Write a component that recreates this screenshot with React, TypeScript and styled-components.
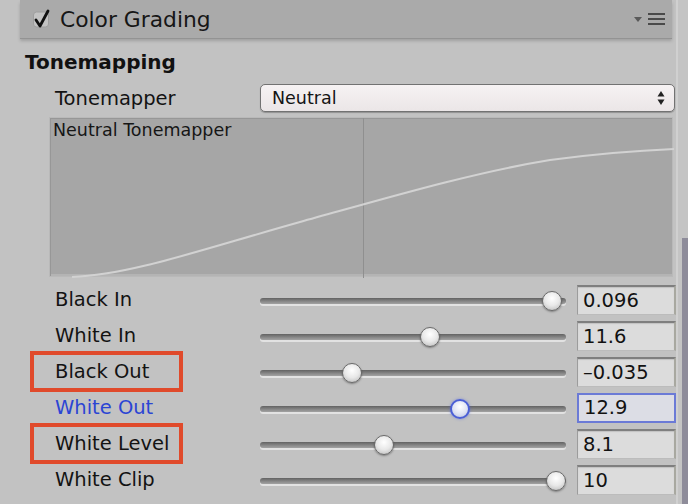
import React from "react";
import styled, { createGlobalStyle } from "styled-components";

const Global = createGlobalStyle`
  html, body { margin: 0; padding: 0; background: #c2c2c2; }
  body { font-family: "DejaVu Sans", "Liberation Sans", sans-serif; color: #111; }
`;

const Frame = styled.div`
  width: 688px;
  height: 504px;
  overflow: hidden;
  display: flex;
  background: #c2c2c2;
`;

const Main = styled.div`
  flex: 1;
  min-width: 0;
  padding-left: 20px;
  display: flex;
  flex-direction: column;
`;

const Gutter = styled.div`
  width: 12px;
  box-sizing: border-box;
  display: flex;
  flex-direction: column;
  align-items: flex-end;
  border-left: 2px solid #d0d0d0;
  background: #c4c4c4;
`;

const ScrollThumb = styled.div`
  width: 6px;
  margin-top: 238px;
  flex: 1;
  background: #8e8c9a;
`;

const Header = styled.div`
  height: 38px;
  margin-right: 4px;
  background: #aaaaaa;
  display: flex;
  align-items: center;
  padding: 0 7px 0 12px;
  box-shadow: 0 1px 0 #939393, 0 3px 3px rgba(0, 0, 0, 0.18);
`;

const HeaderTitle = styled.span`
  flex: 1;
  margin-left: 8px;
  font-size: 21.8px;
  color: #161616;
`;

const SectionTitle = styled.div`
  margin: 12px 0 0 5px;
  font-size: 20px;
  line-height: 24px;
  font-weight: bold;
  color: #111;
`;

const FieldRow = styled.div`
  margin-top: 10px;
  height: 28px;
  display: grid;
  grid-template-columns: 205px 1fr;
  align-items: center;
  padding-left: 35px;
  padding-right: 1px;
`;

const Label = styled.div<{ $active?: boolean; $marked?: boolean }>`
  position: relative;
  font-size: 19.5px;
  color: ${(p) => (p.$active ? "#2b45d4" : "#131313")};
  white-space: nowrap;
  ${(p) =>
    p.$marked &&
    `
    &::before {
      content: "";
      position: absolute;
      left: -25px;
      width: 145px;
      top: -9px;
      height: 33px;
      border: 4px solid #e04a2b;
    }
  `}
`;

const Dropdown = styled.div`
  height: 28px;
  box-sizing: border-box;
  border: 1px solid #727272;
  border-radius: 5px;
  background: linear-gradient(#f6f2f3, #ebe6e7);
  box-shadow: 0 1px 1px rgba(0, 0, 0, 0.25);
  display: flex;
  align-items: center;
  padding: 0 9px 0 11px;
  font-size: 17.5px;
  color: #141414;
`;

const DropdownText = styled.span`
  flex: 1;
`;

const Graph = styled.div`
  position: relative;
  margin: 5px 3px 0 29px;
  height: 160px;
  box-sizing: border-box;
  background: #a6a6a6;
  border: 1px solid #b9b9b9;
  box-shadow: inset 1px 1px 0 #979797, inset 0 -2px 0 #b4b4b4;
  padding: 2px 3px;
`;

const GraphLabel = styled.div`
  position: relative;
  font-size: 17.5px;
  line-height: 20px;
  color: #161616;
`;

const GraphSvg = styled.svg`
  position: absolute;
  left: 0;
  top: 0;
`;

const Rows = styled.div`
  margin-top: 4px;
  display: flex;
  flex-direction: column;
`;

const SliderRow = styled.div`
  height: 36px;
  display: grid;
  grid-template-columns: 205px 306px 1fr;
  align-items: center;
  padding-left: 35px;
`;

const Slider = styled.div`
  position: relative;
  height: 36px;
  display: flex;
  align-items: center;
  padding-top: 4px;
  box-sizing: border-box;
`;

const Track = styled.div`
  flex: 1;
  height: 6px;
  border-radius: 3px;
  background: linear-gradient(#626262, #8a8a8a 60%, #a2a2a2);
  box-shadow: 0 2px 0 #e2e2e2;
`;

const Thumb = styled.div<{ $active?: boolean }>`
  position: absolute;
  top: 10px;
  width: 20px;
  height: 20px;
  box-sizing: border-box;
  border-radius: 50%;
  border: ${(p) => (p.$active ? "2px solid #4b5fd6" : "1px solid #6a6a6a")};
  background: ${(p) =>
    p.$active
      ? "radial-gradient(circle at 50% 35%, #ffffff, #dfe3f3 55%, #b9c0de)"
      : "radial-gradient(circle at 50% 35%, #ffffff, #e8e8e8 50%, #b4b4b4)"};
  box-shadow: ${(p) =>
    p.$active
      ? "0 0 3px rgba(80, 100, 230, 0.6)"
      : "0 1px 2px rgba(0, 0, 0, 0.35)"};
`;

const ValueBox = styled.div<{ $focused?: boolean }>`
  height: 30px;
  box-sizing: border-box;
  margin: 1px 0 0 11px;
  display: flex;
  align-items: center;
  padding-left: 5px;
  font-size: 19.5px;
  color: #121212;
  background: ${(p) => (p.$focused ? "#dcdde5" : "#dcdcdc")};
  ${(p) =>
    p.$focused
      ? `border: 2px solid #6b7ad6;`
      : `border-top: 2px solid #7f7f7f;
         border-left: 1px solid #9c9c9c;
         border-right: 2px solid #a8a8a0;
         border-bottom: 1px solid #bcbcbc;
         box-shadow: inset 0 1px 1px rgba(0,0,0,0.12);`}
`;

const CheckIcon = () => (
  <svg width="20" height="22" viewBox="0 0 20 22">
    <rect x="1.5" y="4" width="15" height="15" rx="3" fill="#c3c3c3" stroke="#9e9e9e" strokeWidth="1" />
    <path d="M4 12 L8 18 L16 3" fill="none" stroke="#111" strokeWidth="2.8" strokeLinecap="round" strokeLinejoin="round" />
  </svg>
);

const MenuIcon = () => (
  <svg width="32" height="14" viewBox="0 0 32 14">
    <polygon points="1,5 9,5 5,10" fill="#5a5a5a" />
    <rect x="15" y="1" width="17" height="2" fill="#4a4a4a" />
    <rect x="15" y="6" width="17" height="2" fill="#4a4a4a" />
    <rect x="15" y="11" width="17" height="2" fill="#4a4a4a" />
  </svg>
);

const UpDownIcon = () => (
  <svg width="8" height="16" viewBox="0 0 8 16">
    <polygon points="4,1 7.5,6.5 0.5,6.5" fill="#222" />
    <polygon points="4,15 7.5,9.5 0.5,9.5" fill="#222" />
  </svg>
);

type Param = {
  label: string;
  value: string;
  pos: number; // 0..1
  active?: boolean;
  marked?: boolean;
};

const params: Param[] = [
  { label: "Black In", value: "0.096", pos: 0.986 },
  { label: "White In", value: "11.6", pos: 0.559 },
  { label: "Black Out", value: "\u20130.035", pos: 0.287, marked: true },
  { label: "White Out", value: "12.9", pos: 0.664, active: true },
  { label: "White Level", value: "8.1", pos: 0.399, marked: true },
  { label: "White Clip", value: "10", pos: 1.0 },
];

const SLIDER_W = 306;
const THUMB = 20;

export default function App() {
  return (
    <>
      <Global />
      <Frame>
        <Main>
          <Header>
            <CheckIcon />
            <HeaderTitle>Color Grading</HeaderTitle>
            <MenuIcon />
          </Header>
          <SectionTitle>Tonemapping</SectionTitle>
          <FieldRow>
            <Label>Tonemapper</Label>
            <Dropdown>
              <DropdownText>Neutral</DropdownText>
              <UpDownIcon />
            </Dropdown>
          </FieldRow>
          <Graph>
            <GraphSvg width="624" height="160" viewBox="0 0 624 160">
              <line x1="313.5" y1="0" x2="313.5" y2="160" stroke="#8f8f8f" strokeWidth="1" />
              <path
                d="M 22 159 C 80 157, 150 132, 250 104 C 330 82, 420 55, 500 42 C 560 34, 600 32, 624 31"
                fill="none"
                stroke="#d2d2d2"
                strokeWidth="2"
              />
            </GraphSvg>
            <GraphLabel>Neutral Tonemapper</GraphLabel>
          </Graph>
          <Rows>
            {params.map((p) => (
              <SliderRow key={p.label}>
                <Label $active={p.active} $marked={p.marked}>
                  {p.label}
                </Label>
                <Slider>
                  <Track />
                  <Thumb
                    $active={p.active}
                    style={{ left: `${p.pos * (SLIDER_W - THUMB)}px` }}
                  />
                </Slider>
                <ValueBox $focused={p.active}>{p.value}</ValueBox>
              </SliderRow>
            ))}
          </Rows>
        </Main>
        <Gutter>
          <ScrollThumb />
        </Gutter>
      </Frame>
    </>
  );
}
